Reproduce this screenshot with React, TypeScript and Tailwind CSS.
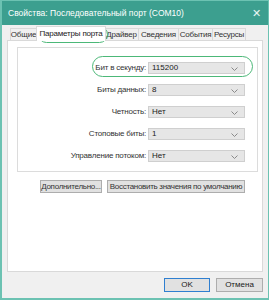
import React from 'react';

const tabs = [
    { label: 'Общие', w: 'w-[27px]' },
    { label: 'Параметры порта', w: 'w-[70px]', active: true },
    { label: 'Драйвер', w: 'w-[35px]' },
    { label: 'Сведения', w: 'w-[41px]' },
    { label: 'События', w: 'w-[35px]' },
    { label: 'Ресурсы', w: 'w-[34px]' },
];

const rows = [
    { label: 'Бит в секунду:', value: '115200' },
    { label: 'Биты данных:', value: '8' },
    { label: 'Четность:', value: 'Нет' },
    { label: 'Стоповые биты:', value: '1' },
    { label: 'Управление потоком:', value: 'Нет' },
];

const Chevron = () => (
    <svg width="7" height="4" viewBox="0 0 7 4" className="absolute right-[6px] top-[4px]">
        <path d="M0.5 0.5 L3.5 3.5 L6.5 0.5" fill="none" stroke="#8a8a8a" strokeWidth="1" />
    </svg>
);

const App: React.FC = () => {
    return (
        <div className="w-[269px] h-[300px] bg-white">
            <div
                className="relative w-[269px] h-[300px] bg-[#f0f0f0] border border-[#6cc2b2] border-l-2 border-b-2 flex flex-col text-[#1a1a1a] whitespace-nowrap"
                style={{ fontFamily: '"Liberation Sans", Arial, sans-serif' }}
            >
                {/* title bar */}
                <div className="h-[24px] bg-[#3c9f8f] flex items-center justify-between pl-[6px] pr-[7px] text-white">
                    <span className="text-[8.5px] leading-none">Свойства: Последовательный порт (COM10)</span>
                    <span className="text-[11px] leading-none text-[#e8f5f2]">✕</span>
                </div>

                {/* tabs */}
                <div className="flex items-end h-[15px] mt-[1px] pl-[8px]">
                    {tabs.map((t) =>
                        t.active ? (
                            <div
                                key={t.label}
                                className={`${t.w} h-[15px] bg-white border border-b-0 border-[#d9d9d9] flex items-center justify-center text-[8px] tracking-[-0.2px] -mx-[1px] relative z-10`}
                            >
                                {t.label}
                            </div>
                        ) : (
                            <div
                                key={t.label}
                                className={`${t.w} h-[13px] border border-b-0 border-[#d9d9d9] -ml-px first:ml-0 flex items-center justify-center text-[8px] tracking-[-0.2px] text-[#333]`}
                            >
                                {t.label}
                            </div>
                        )
                    )}
                </div>

                {/* tab panel */}
                <div className="ml-[5px] w-[256px] h-[232px] bg-white border border-[#d9d9d9] -mt-px flex flex-col">
                    <div className="ml-[9px] mt-[6px] w-[241px] h-[125px] border border-[#dcdcdc] pt-[14px] flex flex-col gap-[10px]">
                        {rows.map((r) => (
                            <div key={r.label} className="flex items-center h-[12px]">
                                <div className="w-[130px] pr-[2px] text-right text-[8px] tracking-[-0.2px] text-[#333] leading-none">{r.label}</div>
                                <div className="relative w-[97px] h-[12px] bg-[#e6e6e6] border border-[#cfcfcf] flex items-center pl-[3px] text-[8px] leading-none">
                                    {r.value}
                                    <Chevron />
                                </div>
                            </div>
                        ))}
                    </div>
                    <div className="flex gap-[5px] mt-[8px] ml-[32px]">
                        <div className="w-[62px] h-[13px] bg-[#e1e1e1] border border-[#adadad] flex items-center justify-center text-[8px] tracking-[-0.3px] text-[#333] leading-none">
                            Дополнительно...
                        </div>
                        <div className="w-[138px] h-[13px] bg-[#e1e1e1] border border-[#adadad] flex items-center justify-center text-[8px] tracking-[-0.3px] text-[#333] leading-none">
                            Восстановить значения по умолчанию
                        </div>
                    </div>
                </div>

                {/* bottom buttons */}
                <div className="flex justify-end gap-[6px] mt-[6px] pr-[5px]">
                    <div className="w-[46px] h-[14px] bg-[#e1e1e1] border border-[#2f7fd0] flex items-center justify-center text-[8px] leading-none">
                        OK
                    </div>
                    <div className="w-[47px] h-[14px] bg-[#e1e1e1] border border-[#adadad] flex items-center justify-center text-[8px] leading-none">
                        Отмена
                    </div>
                </div>

                {/* green highlight annotations */}
                <div className="absolute left-[36px] top-[25px] w-[70px] h-[17px] rounded-full border-[1.5px] border-[#4cb878]" />
                <div className="absolute left-[90px] top-[55px] w-[161px] h-[21px] rounded-full border-[1.5px] border-[#4cb878]" />
            </div>
        </div>
    );
};

export default App;
